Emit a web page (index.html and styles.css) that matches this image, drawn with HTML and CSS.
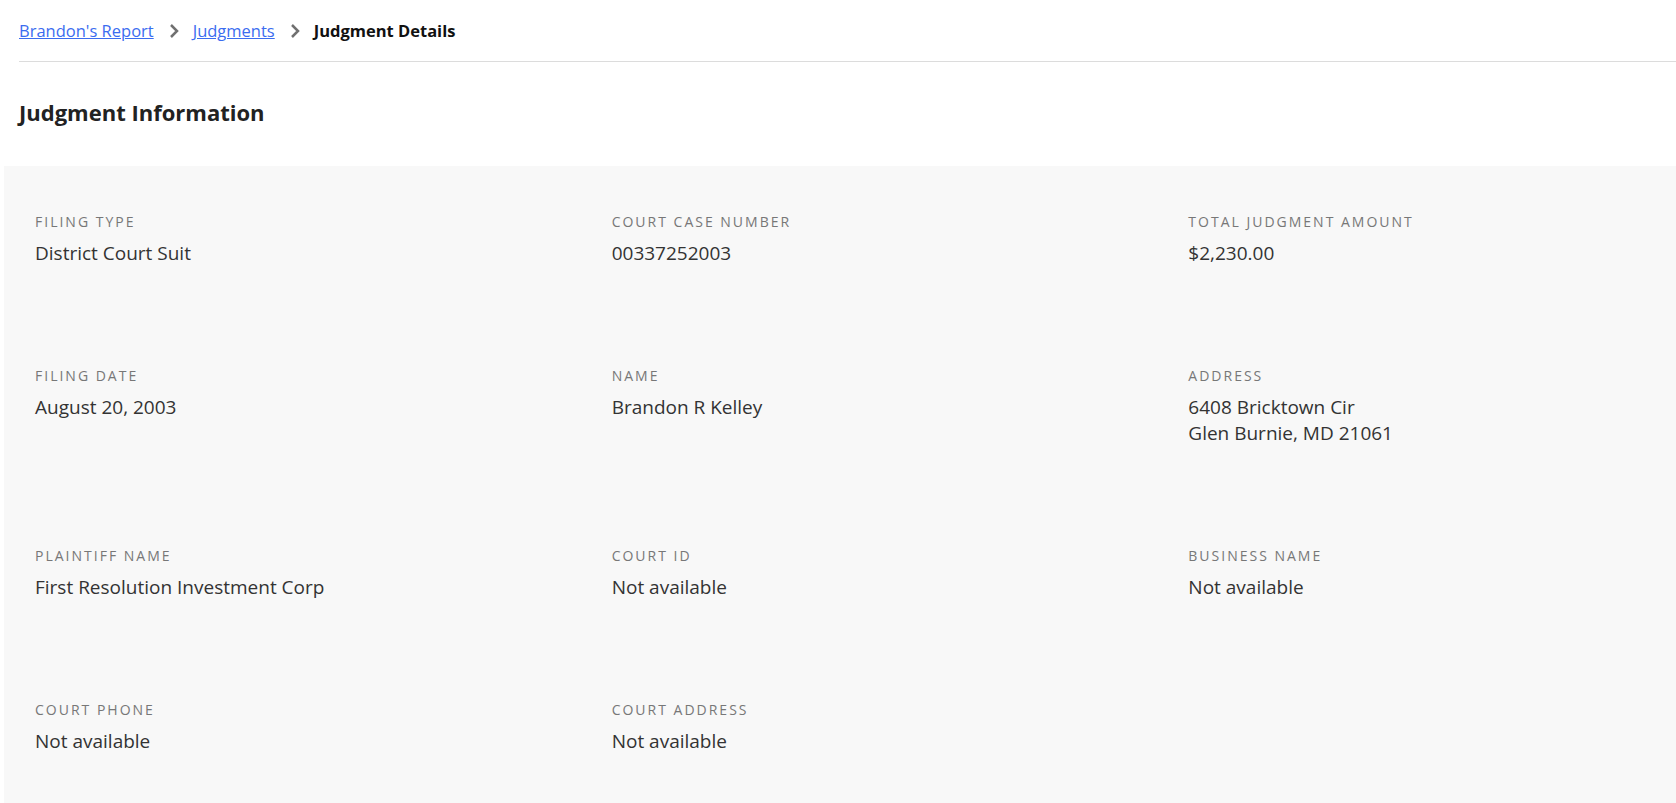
FILE: index.html
```html
<!DOCTYPE html>
<html lang="en">
<head>
    <meta charset="UTF-8">
    <meta name="viewport" content="width=device-width, initial-scale=1.0">
    <title>Judgment Details</title>
    <link rel="stylesheet" href="styles.css">
</head>
<body>
<div id="page">
    <div class="breadcrumb">
        <a href="#" class="crumb-link">Brandon's Report</a>
        <svg class="chevron" viewBox="0 0 10 16"><path d="M2 2 L8 8 L2 14"/></svg>
        <a href="#" class="crumb-link">Judgments</a>
        <svg class="chevron" viewBox="0 0 10 16"><path d="M2 2 L8 8 L2 14"/></svg>
        <span class="crumb-current">Judgment Details</span>
    </div>

    <h2 class="section-title">Judgment Information</h2>

    <div class="details">
        <div class="detail">
            <div class="detail-label">Filing Type</div>
            <div class="detail-value">District Court Suit</div>
        </div>
        <div class="detail">
            <div class="detail-label">Court Case Number</div>
            <div class="detail-value">00337252003</div>
        </div>
        <div class="detail">
            <div class="detail-label">Total Judgment Amount</div>
            <div class="detail-value">$2,230.00</div>
        </div>

        <div class="detail">
            <div class="detail-label">Filing Date</div>
            <div class="detail-value">August 20, 2003</div>
        </div>
        <div class="detail">
            <div class="detail-label">Name</div>
            <div class="detail-value">Brandon R Kelley</div>
        </div>
        <div class="detail">
            <div class="detail-label">Address</div>
            <div class="detail-value">6408 Bricktown Cir<br>Glen Burnie, MD 21061</div>
        </div>

        <div class="detail">
            <div class="detail-label">Plaintiff Name</div>
            <div class="detail-value">First Resolution Investment Corp</div>
        </div>
        <div class="detail">
            <div class="detail-label">Court ID</div>
            <div class="detail-value">Not available</div>
        </div>
        <div class="detail">
            <div class="detail-label">Business Name</div>
            <div class="detail-value">Not available</div>
        </div>

        <div class="detail">
            <div class="detail-label">Court Phone</div>
            <div class="detail-value">Not available</div>
        </div>
        <div class="detail">
            <div class="detail-label">Court Address</div>
            <div class="detail-value">Not available</div>
        </div>
    </div>
</div>
</body>
</html>
```

FILE: styles.css
```css
/* General Styles */
body {
    margin: 0;
    background-color: #fff;
    font-family: "Open Sans", "Noto Sans", sans-serif;
    color: #222;
}

#page {
    padding-left: 4px;
}

/* Breadcrumb */
.breadcrumb {
    display: flex;
    align-items: center;
    margin-left: 15px;
    height: 61px;
    border-bottom: 1px solid #dcdcdc;
    font-size: 16.5px;
}

.crumb-link {
    color: #3b6cf0;
    text-decoration: underline;
}

.chevron {
    width: 10px;
    height: 16px;
    margin: 0 14px 0 15px;
    fill: none;
    stroke: #707070;
    stroke-width: 2.5;
}

.crumb-current {
    font-weight: 700;
    color: #111;
}

/* Section */
.section-title {
    margin: 0;
    padding: 35px 15px 0;
    height: 69px;
    font-size: 22px;
    font-weight: 700;
    color: #222;
}

.details {
    box-sizing: border-box;
    display: grid;
    grid-template-columns: repeat(3, 1fr);
    column-gap: 120px;
    row-gap: 100px;
    padding: 46px 31px 30px;
    background-color: #f8f8f8;
    min-height: calc(100vh - 166px);
    align-content: start;
}

.detail-label {
    font-size: 14px;
    line-height: 20px;
    letter-spacing: 2px;
    text-transform: uppercase;
    color: #777;
}

.detail-value {
    margin-top: 8px;
    font-size: 19px;
    line-height: 26px;
    color: #333;
}
```
